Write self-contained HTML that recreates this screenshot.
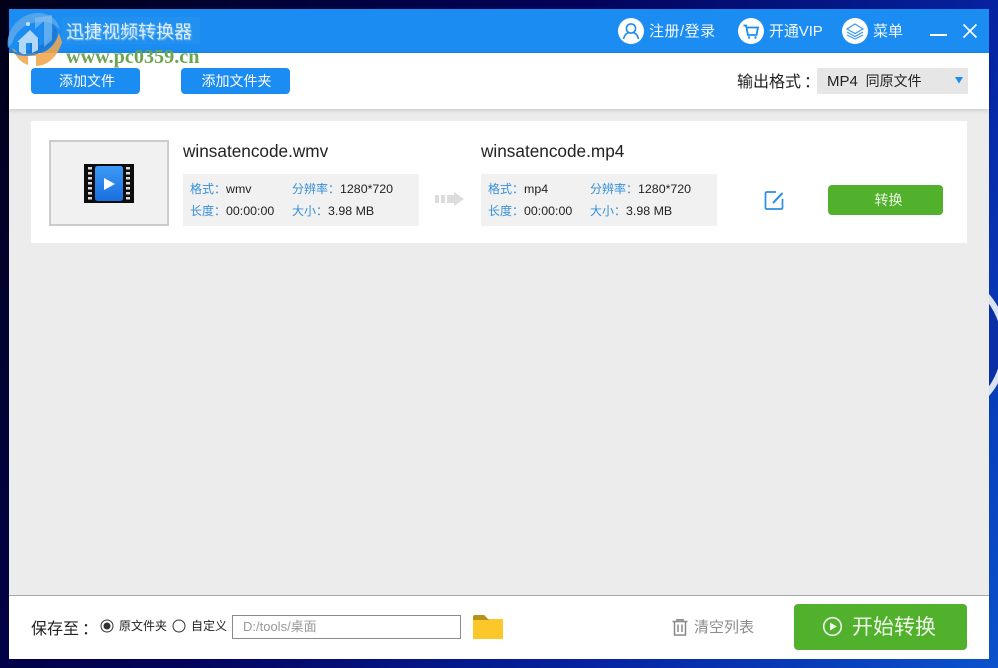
<!DOCTYPE html>
<html lang="zh">
<head>
<meta charset="utf-8">
<title>迅捷视频转换器</title>
<style>
html,body{margin:0;padding:0;width:998px;height:668px;overflow:hidden}
body{position:relative;background:linear-gradient(122deg,#010118 0%,#03035c 42%,#0624a4 72%,#0b52cc 100%);font-family:"Liberation Sans","Noto Sans CJK SC",sans-serif;color:#222}
.a{position:absolute;white-space:nowrap}
#win{left:9px;top:9px;width:980px;height:650px;background:#ececec}
.btn{background:#1a8cf2;color:#fff;border-radius:4px;text-align:center;font-size:14px;line-height:26px;height:26px;width:109px;top:68px;box-sizing:border-box}
.tt{color:#f2f8ff;font-size:15px;line-height:20px;top:22px}
.info{background:#f1f1f1;width:236px;height:52px;top:174px}
.l{font-size:12px;line-height:16px;color:#3590dc}
.l b{font-weight:normal;color:#222;font-size:12.4px}
.name{font-size:17.2px;line-height:22px;top:140px;color:#222}
.c{position:relative;left:3px}
</style>
</head>
<body>
<svg class="a" style="left:0;top:0" width="998" height="668" viewBox="0 0 998 668"><circle cx="930" cy="345" r="75" fill="#0a2fa6" stroke="#d8e2f0" stroke-width="6"/></svg>
<div class="a" id="win"></div>
<div class="a" style="left:9px;top:9px;width:980px;height:44px;background:#1a8cf2"></div>
<div class="a" style="left:9px;top:53px;width:980px;height:56px;background:#fff;box-shadow:0 1px 5px rgba(0,0,0,.18)"></div>

<div class="a" style="left:62px;top:17px;width:138px;height:27px;background:#2190ef"></div>
<div class="a" style="left:67px;top:21px;font-size:18px;line-height:24px;color:rgba(255,255,255,.35);filter:blur(.4px)">迅捷视频转换器</div>
<div class="a" style="left:66px;top:20px;font-size:18px;line-height:24px;color:rgba(255,255,255,.8);filter:blur(.3px)">迅捷视频转换器</div>

<svg class="a" style="left:6px;top:12px;opacity:.88" width="58" height="56" viewBox="0 0 58 56">
<path d="M6 36C10 46 16 51 22 53L22 44L30 44L30 54C42 54 52 44 56 30L53 21C50 32 42 41 30 42L14 42Z" fill="#f3a64c"/>
<path d="M2 36C-1 18 14 1 32 1C44 1 52 8 54 18C48 11 42 9 32 10C18 11 8 22 7 30Z" fill="#5ba8ea"/>
<path d="M2 32C3 40 12 43 24 38L24 30L12 30L24 19L33 27L33 34C42 29 50 20 46 12C54 17 53 30 40 38C25 47 3 46 2 32Z" fill="#1d78cf"/>
<path d="M11 30L24 18L32 26L32 38L26 41L26 31L20 31L20 42C16 42 14 41 13 39L13 30Z" fill="#c7e3fa"/>
<path d="M29 6L46 3L46 28L38 35L38 9L29 17Z" fill="#9fcdf3" opacity=".6"/>
<circle cx="22" cy="12" r="2" fill="#d8ecff"/>
</svg>
<div class="a" style="left:66px;top:47px;font:bold 20.200px/20px 'Liberation Serif',serif;color:#6ba54f">www.pc0359.cn</div>

<svg class="a" style="left:618px;top:18px" width="26" height="26" viewBox="0 0 26 26"><circle cx="13" cy="13" r="13" fill="#fff"/><circle cx="13" cy="10.500" r="4.600" fill="none" stroke="#1a8cf2" stroke-width="1.600"/><path d="M5.500 21C6.500 16.500 9 15 11 14.500M20.500 21C19.500 16.500 17 15 15 14.500" fill="none" stroke="#1a8cf2" stroke-width="1.600"/></svg>
<div class="a tt" style="left:649px;letter-spacing:.5px">注册/登录</div>
<svg class="a" style="left:738px;top:18px" width="26" height="26" viewBox="0 0 26 26"><circle cx="13" cy="13" r="13" fill="#fff"/><path d="M5.500 7.500H8L10 17H18.500L20 9.500H8.500" fill="none" stroke="#1a8cf2" stroke-width="1.800"/><circle cx="11" cy="19.500" r="1.200" fill="#1a8cf2"/><circle cx="17.500" cy="19.500" r="1.200" fill="#1a8cf2"/></svg>
<div class="a tt" style="left:769px;letter-spacing:-.1px">开通VIP</div>
<svg class="a" style="left:842px;top:18px" width="26" height="26" viewBox="0 0 26 26"><circle cx="13" cy="13" r="13" fill="#fff"/><path d="M13 6L21 11L13 15.500L5 11Z" fill="none" stroke="#3a9bee" stroke-width="1.200"/><path d="M5 14L13 18.500L21 14M5 17L13 21L21 17" fill="none" stroke="#3a9bee" stroke-width="1.200"/></svg>
<div class="a tt" style="left:873px">菜单</div>
<div class="a" style="left:930px;top:34px;width:17px;height:2px;background:#fff"></div>
<svg class="a" style="left:962px;top:23px" width="16" height="16" viewBox="0 0 16 16"><path d="M1.500 1.500L14.500 14.500M14.500 1.500L1.500 14.500" stroke="#fff" stroke-width="1.700"/></svg>

<div class="a btn" style="left:31px;padding-left:3px">添加文件</div>
<div class="a btn" style="left:181px;padding-left:2px">添加文件夹</div>
<div class="a" style="left:737px;top:72px;font-size:16px;line-height:22px;color:#222">输出格式<span class="c">：</span></div>
<div class="a" style="left:817px;top:68px;width:151px;height:26px;background:#e6e6e6"></div>
<div class="a" style="left:827px;top:71px;font-size:14px;line-height:20px;color:#222"><span style="font-size:15px">MP4</span>&nbsp; 同原文件</div>
<svg class="a" style="left:955px;top:77px" width="8" height="7" viewBox="0 0 8 7"><path d="M0 0H8L4 6.500Z" fill="#1a8cf2"/></svg>

<div class="a" style="left:31px;top:121px;width:936px;height:122px;background:#fff"></div>
<div class="a" style="left:49px;top:140px;width:116px;height:82px;background:#f1f1f1;border:2px solid #ccc"></div>
<svg class="a" style="left:84px;top:164px" width="50" height="39" viewBox="0 0 50 39">
<defs><linearGradient id="g" x1="0" y1="0" x2="0" y2="1"><stop offset="0" stop-color="#3d9af5"/><stop offset="1" stop-color="#1a6fe0"/></linearGradient></defs>
<rect width="50" height="39" fill="#0d0d0d"/>
<g fill="#dcdcdc"><rect x="4" y="3" width="4" height="2.500"/><rect x="4" y="8" width="4" height="2.500"/><rect x="4" y="13" width="4" height="2.500"/><rect x="4" y="18" width="4" height="2.500"/><rect x="4" y="23" width="4" height="2.500"/><rect x="4" y="28" width="4" height="2.500"/><rect x="4" y="33" width="4" height="2.500"/><rect x="42" y="3" width="4" height="2.500"/><rect x="42" y="8" width="4" height="2.500"/><rect x="42" y="13" width="4" height="2.500"/><rect x="42" y="18" width="4" height="2.500"/><rect x="42" y="23" width="4" height="2.500"/><rect x="42" y="28" width="4" height="2.500"/><rect x="42" y="33" width="4" height="2.500"/></g>
<rect x="11" y="2" width="28" height="35" rx="2.500" fill="url(#g)"/>
<path d="M20 14L31 20L20 26Z" fill="#fff"/>
</svg>

<div class="a name" style="left:183px">winsatencode.wmv</div>
<div class="a info" style="left:183px"></div>
<div class="a l" style="left:190px;top:181px">格式：<b>wmv</b></div>
<div class="a l" style="left:292px;top:181px">分辨率：<b>1280*720</b></div>
<div class="a l" style="left:190px;top:203px">长度：<b>00:00:00</b></div>
<div class="a l" style="left:292px;top:203px">大小：<b>3.98 MB</b></div>

<svg class="a" style="left:435px;top:191px" width="30" height="16" viewBox="0 0 30 16"><g fill="#dcdcdc"><rect x="0" y="4" width="4" height="8"/><rect x="6" y="4" width="4" height="8"/><rect x="12" y="4" width="7" height="8"/><path d="M19 1L29 8L19 15Z"/></g></svg>

<div class="a name" style="left:481px">winsatencode.mp4</div>
<div class="a info" style="left:481px"></div>
<div class="a l" style="left:488px;top:181px">格式：<b>mp4</b></div>
<div class="a l" style="left:590px;top:181px">分辨率：<b>1280*720</b></div>
<div class="a l" style="left:488px;top:203px">长度：<b>00:00:00</b></div>
<div class="a l" style="left:590px;top:203px">大小：<b>3.98 MB</b></div>

<svg class="a" style="left:764px;top:190px" width="21" height="21" viewBox="0 0 21 21"><path d="M12 2H3Q1.500 2 1.500 3.500V17.500Q1.500 19 3 19H17Q18.500 19 18.500 17.500V9" fill="none" stroke="#2a8fe6" stroke-width="1.700"/><path d="M9 13L18.500 3" fill="none" stroke="#2a8fe6" stroke-width="2"/></svg>
<div class="a" style="left:828px;top:185px;width:115px;height:30px;padding-left:6px;box-sizing:border-box;background:#52b12c;border-radius:4px;color:#e8f5e0;text-align:center;font-size:14px;line-height:30px">转换</div>

<div class="a" style="left:9px;top:595px;width:980px;height:64px;background:#fff;border-top:1px solid #a8a8a8;box-sizing:border-box"></div>
<div class="a" style="left:31px;top:619px;font-size:16px;line-height:22px;color:#222">保存至<span class="c">：</span></div>
<svg class="a" style="left:100px;top:619px" width="14" height="14" viewBox="0 0 14 14"><circle cx="7" cy="7" r="6" fill="#fff" stroke="#333"/><circle cx="7" cy="7" r="3.500" fill="#333"/></svg>
<div class="a" style="left:119px;top:618px;font-size:12px;line-height:16px;color:#222">原文件夹</div>
<svg class="a" style="left:172px;top:619px" width="14" height="14" viewBox="0 0 14 14"><circle cx="7" cy="7" r="6" fill="#fff" stroke="#333"/></svg>
<div class="a" style="left:191px;top:618px;font-size:12px;line-height:16px;color:#222">自定义</div>
<div class="a" style="left:232px;top:615px;width:229px;height:24px;box-sizing:border-box;border:1px solid #8a8a8a;background:#fff;padding-left:10px;font-size:13px;line-height:22px;color:#999">D:/tools/桌面</div>
<svg class="a" style="left:473px;top:615px" width="30" height="24" viewBox="0 0 30 24"><path d="M0 5V2Q0 0 2 0H10Q12 0 13 2L15 4H17V6H0Z" fill="#b8901a"/><path d="M0 5H15L16 4H30V24H0Z" fill="#fcc72b"/></svg>

<svg class="a" style="left:672px;top:619px" width="16" height="17" viewBox="0 0 16 17"><path d="M0.500 2.500H15.500M5 2.500V0.800H11V2.500M2.500 2.500V16H13.500V2.500M6 5.500V13M10 5.500V13" fill="none" stroke="#888" stroke-width="1.500"/></svg>
<div class="a" style="left:694px;top:618px;font-size:15px;line-height:20px;color:#8c8c8c">清空列表</div>
<div class="a" style="left:794px;top:604px;width:173px;height:46px;background:#52b12c;border-radius:4px"></div>
<svg class="a" style="left:822px;top:616px" width="21" height="21" viewBox="0 0 21 21"><circle cx="10.500" cy="10.500" r="8.800" fill="none" stroke="#eef8e8" stroke-width="1.600"/><path d="M8 6.500L15 10.500L8 14.500Z" fill="#eef8e8"/></svg>
<div class="a" style="left:852px;top:613px;font-size:21px;line-height:30px;color:#eef8e8">开始转换</div>
</body>
</html>
